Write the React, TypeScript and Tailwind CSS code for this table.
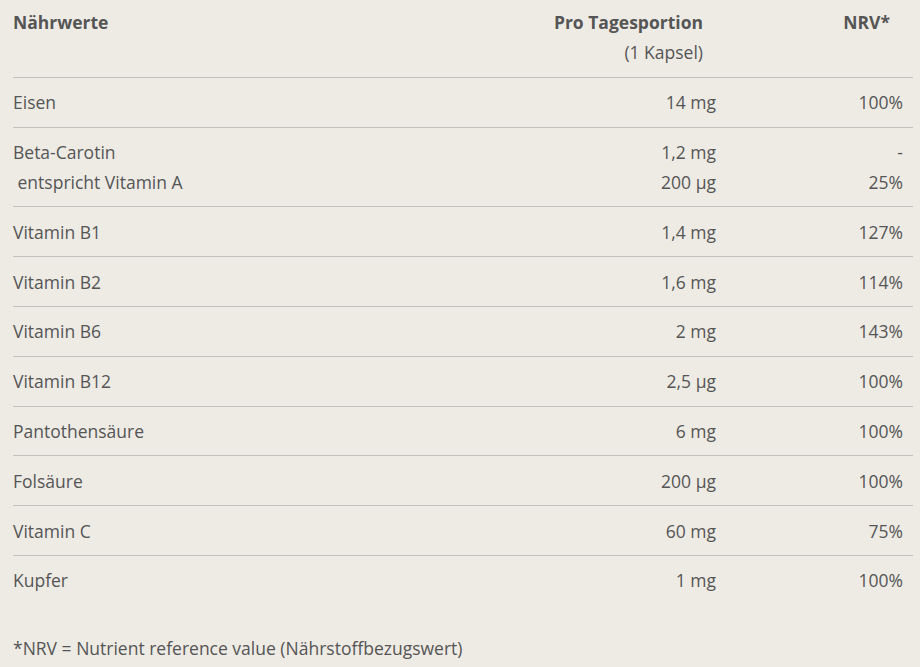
const rows: { name: string[]; amount: string[]; nrv: string[] }[] = [
  { name: ["Eisen"], amount: ["14 mg"], nrv: ["100%"] },
  { name: ["Beta-Carotin", "\u00a0entspricht Vitamin A"], amount: ["1,2 mg", "200 µg"], nrv: ["-", "25%"] },
  { name: ["Vitamin B1"], amount: ["1,4 mg"], nrv: ["127%"] },
  { name: ["Vitamin B2"], amount: ["1,6 mg"], nrv: ["114%"] },
  { name: ["Vitamin B6"], amount: ["2 mg"], nrv: ["143%"] },
  { name: ["Vitamin B12"], amount: ["2,5 µg"], nrv: ["100%"] },
  { name: ["Pantothensäure"], amount: ["6 mg"], nrv: ["100%"] },
  { name: ["Folsäure"], amount: ["200 µg"], nrv: ["100%"] },
  { name: ["Vitamin C"], amount: ["60 mg"], nrv: ["75%"] },
  { name: ["Kupfer"], amount: ["1 mg"], nrv: ["100%"] },
];

const Lines = ({ items }: { items: string[] }) => (
  <>
    {items.map((t, i) => (
      <div key={i}>{t}</div>
    ))}
  </>
);

export default function App() {
  return (
    <div className="min-h-[667px] w-[920px] bg-[#eeebe5] pl-[13px] pr-[7px] font-['Open_Sans',sans-serif] text-[17.5px] leading-[29.8px] text-[#555]">
      <table className="w-[900px] border-collapse">
        <thead>
          <tr className="border-b border-[#c4c0bb]">
            <th className="pt-[8px] pb-[9.4px] text-left align-top font-bold">Nährwerte</th>
            <th className="w-[300px] pt-[8px] pb-[9.4px] pr-[23px] text-right align-top font-bold">
              Pro Tagesportion
              <div className="font-normal">(1 Kapsel)</div>
            </th>
            <th className="w-[187px] pt-[8px] pb-[9.4px] pr-[23px] text-right align-top font-bold">NRV*</th>
          </tr>
        </thead>
        <tbody>
          {rows.map((r, i) => (
            <tr key={i} className={i < rows.length - 1 ? "border-b border-[#c4c0bb]" : ""}>
              <td className="pt-[10.5px] pb-[8.5px] align-top">
                <Lines items={r.name} />
              </td>
              <td className="pt-[10.5px] pb-[8.5px] pr-[10px] text-right align-top">
                <Lines items={r.amount} />
              </td>
              <td className="pt-[10.5px] pb-[8.5px] pr-[10px] text-right align-top">
                <Lines items={r.nrv} />
              </td>
            </tr>
          ))}
        </tbody>
      </table>
      <p className="mt-[29px]">*NRV = Nutrient reference value (Nährstoffbezugswert)</p>
    </div>
  );
}
